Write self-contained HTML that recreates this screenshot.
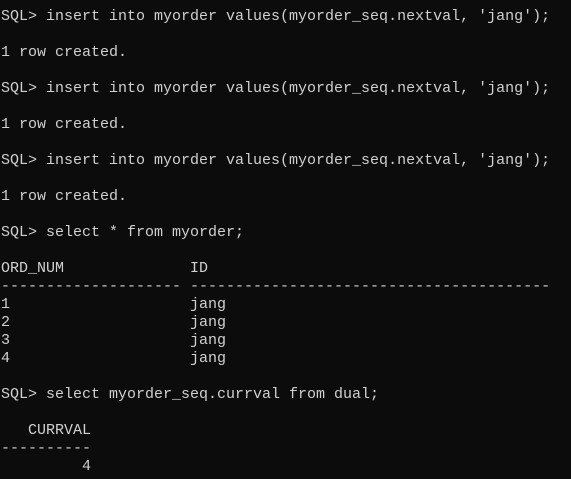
<!DOCTYPE html>
<html><head><style>
html,body{margin:0;padding:0;background:#0c0c0c;width:571px;height:479px;overflow:hidden}
pre{margin:0;position:absolute;left:1px;top:8px;font-family:"Liberation Mono",monospace;font-size:15px;line-height:18px;color:#d0d0d0;letter-spacing:0}
</style></head><body><pre>SQL&gt; insert into myorder values(myorder_seq.nextval, 'jang');

1 row created.

SQL&gt; insert into myorder values(myorder_seq.nextval, 'jang');

1 row created.

SQL&gt; insert into myorder values(myorder_seq.nextval, 'jang');

1 row created.

SQL&gt; select * from myorder;

ORD_NUM              ID
-------------------- ----------------------------------------
1                    jang
2                    jang
3                    jang
4                    jang

SQL&gt; select myorder_seq.currval from dual;

   CURRVAL
----------
         4</pre></body></html>
